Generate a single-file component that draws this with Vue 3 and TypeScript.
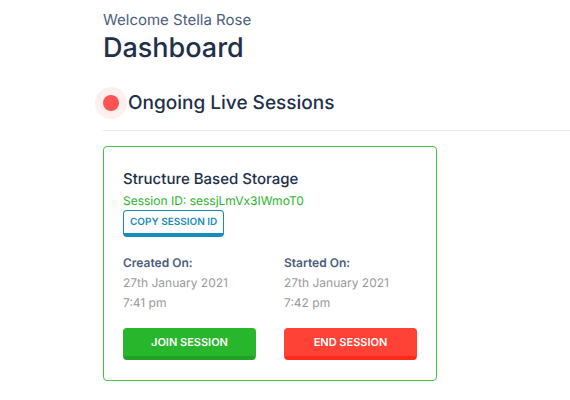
<script setup lang="ts">
interface Moment {
  label: string
  date: string
  time: string
}

interface Session {
  title: string
  id: string
  moments: Moment[]
}

const userName = 'Stella Rose'

const session: Session = {
  title: 'Structure Based Storage',
  id: 'sessjLmVx3IWmoT0',
  moments: [
    { label: 'Created On:', date: '27th January 2021', time: '7:41 pm' },
    { label: 'Started On:', date: '27th January 2021', time: '7:42 pm' },
  ],
}

function copyId(): void {
  navigator.clipboard?.writeText(session.id)
}
</script>

<template>
  <main class="page">
    <header>
      <p class="welcome">Welcome {{ userName }}</p>
      <h1 class="title">Dashboard</h1>
    </header>

    <section>
      <div class="section-head">
        <span class="live-dot" aria-hidden="true"></span>
        <h2 class="section-title">Ongoing Live Sessions</h2>
      </div>

      <article class="card">
        <h3 class="card-title">{{ session.title }}</h3>
        <p class="session-id">Session ID: {{ session.id }}</p>
        <button class="copy" type="button" @click="copyId">COPY SESSION ID</button>

        <dl class="columns moments">
          <div v-for="moment in session.moments" :key="moment.label">
            <dt>{{ moment.label }}</dt>
            <dd>{{ moment.date }}</dd>
            <dd>{{ moment.time }}</dd>
          </div>
        </dl>

        <div class="columns">
          <button class="action join" type="button">JOIN SESSION</button>
          <button class="action end" type="button">END SESSION</button>
        </div>
      </article>
    </section>
  </main>
</template>

<style>
body {
  margin: 0;
  background: #fff;
}
</style>

<style scoped>
.page {
  padding: 8px 0 20px 103px;
  font-family: Inter, "Liberation Sans", sans-serif;
  text-rendering: geometricPrecision;
  color: #222f49;
}

h1,
h2,
h3,
p,
dl,
dd {
  margin: 0;
}

.welcome {
  font-size: 15px;
  line-height: 24px;
  color: #4b5d7c;
}

.title {
  font-size: 27px;
  line-height: 32px;
  font-weight: 500;
}

.section-head {
  display: flex;
  align-items: center;
  gap: 9px;
  padding: 23px 0 11px;
  border-bottom: 1px solid #e9e9e9;
}

.live-dot {
  width: 16px;
  height: 16px;
  border-radius: 50%;
  background: #ff5252;
  box-shadow: 0 0 0 8px #fff0f0;
}

.section-title {
  font-size: 19px;
  line-height: 32px;
  font-weight: 500;
}

.card {
  box-sizing: border-box;
  max-width: 334px;
  margin-top: 15px;
  padding: 20px 19px;
  border: 1px solid #43c443;
  border-radius: 4px;
}

.card-title {
  font-size: 15px;
  line-height: 24px;
  font-weight: 500;
}

.session-id {
  font-size: 12px;
  line-height: 19px;
  color: #28b62c;
}

button {
  font-family: inherit;
  text-rendering: inherit;
  cursor: pointer;
}

.copy {
  display: block;
  padding: 0 6px;
  border: 1px solid #158cba;
  border-bottom-width: 4px;
  border-radius: 4px;
  background: #fff;
  color: #158cba;
  font-size: 10px;
  line-height: 22px;
  font-weight: 600;
}

.columns {
  display: grid;
  grid-template-columns: 1fr 1fr;
  column-gap: 28px;
}

.moments {
  margin: 16px 0 15px;
  font-size: 12px;
  line-height: 20px;
  color: #999;
}

.moments dt {
  font-weight: 600;
  color: #4b5d7c;
}

.action {
  padding: 0;
  border: 1px solid;
  border-bottom-width: 4px;
  border-radius: 4px;
  color: #fff;
  font-size: 11px;
  line-height: 27px;
  font-weight: 600;
}

.join {
  background: #28b62c;
  border-color: #28b62c #28b62c #23a127;
}

.end {
  background: #ff4136;
  border-color: #ff4136 #ff4136 #ff291c;
}
</style>
